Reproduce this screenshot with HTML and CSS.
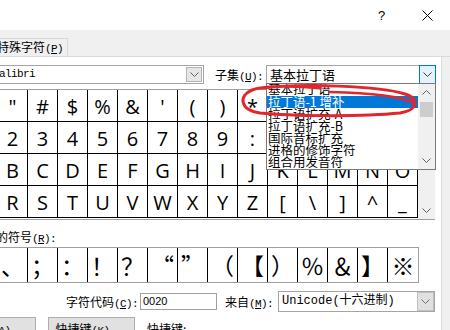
FILE: index.html
```html
<!DOCTYPE html>
<html>
<head>
<meta charset="utf-8">
<link rel="stylesheet" href="styles.css">
</head>
<body>
<div class="window">
  <div class="titlebar">
    <div class="tb-btn help">?</div>
    <div class="tb-btn"><svg class="close" width="11" height="11" viewBox="0 0 11 11"><path d="M0.5 0.5 L10.5 10.5 M10.5 0.5 L0.5 10.5" stroke="#000" stroke-width="1" fill="none"/></svg></div>
  </div>
  <div class="tabs">
    <div class="tab active">符号<span class="k">(<u>S</u>)</span></div>
    <div class="tab">特殊字符<span class="k">(<u>P</u>)</span></div>
  </div>
  <div class="body">
    <div class="page">
      <div class="font-row">
        <div class="lbl-font">字体<span class="k">(<u>F</u>):</span></div>
        <div class="combo font">
          <div class="combo-text mono-s">Calibri</div>
          <div class="combo-btn"><svg width="9" height="5" viewBox="0 0 9 5"><path d="M0.5 0.5 L4.5 4.5 L8.5 0.5" fill="none" stroke="#606060"/></svg></div>
        </div>
        <div class="lbl-sub">子集<span class="k">(<u>U</u>):</span></div>
        <div class="combo sub">
          <div class="combo-text">基本拉丁语</div>
          <div class="combo-btn active"><svg width="9" height="5" viewBox="0 0 9 5"><path d="M0.5 0.5 L4.5 4.5 L8.5 0.5" fill="none" stroke="#404040"/></svg></div>
          <div class="dd-list">
            <div class="dd-items">
              <div class="dd-item">基本拉丁语</div>
              <div class="dd-item sel">拉丁语-1 增补</div>
              <div class="dd-item">拉丁语扩充-A</div>
              <div class="dd-item">拉丁语扩充-B</div>
              <div class="dd-item">国际音标扩充</div>
              <div class="dd-item">进格的修饰字符</div>
              <div class="dd-item">组合用发音符</div>
            </div>
            <div class="dd-scroll">
              <div class="sb-btn"><svg width="9" height="5" viewBox="0 0 9 5"><path d="M0.5 4.5 L4.5 0.5 L8.5 4.5" fill="none" stroke="#606060"/></svg></div>
              <div class="sb-thumb"></div>
              <div class="sb-fill"></div>
              <div class="sb-btn"><svg width="9" height="5" viewBox="0 0 9 5"><path d="M0.5 0.5 L4.5 4.5 L8.5 0.5" fill="none" stroke="#606060"/></svg></div>
            </div>
          </div>
        </div>
      </div>

      <div class="symbols">
        <div class="grid">
          <div class="cell">&nbsp;</div><div class="cell">!</div><div class="cell">&quot;</div><div class="cell">#</div><div class="cell">$</div><div class="cell">%</div><div class="cell">&amp;</div><div class="cell">'</div><div class="cell">(</div><div class="cell">)</div><div class="cell">*</div><div class="cell">+</div><div class="cell">,</div><div class="cell">-</div><div class="cell">.</div><div class="cell">/</div>
          <div class="cell">0</div><div class="cell">1</div><div class="cell">2</div><div class="cell">3</div><div class="cell">4</div><div class="cell">5</div><div class="cell">6</div><div class="cell">7</div><div class="cell">8</div><div class="cell">9</div><div class="cell">:</div><div class="cell">;</div><div class="cell">&lt;</div><div class="cell">=</div><div class="cell">&gt;</div><div class="cell">?</div>
          <div class="cell">@</div><div class="cell">A</div><div class="cell">B</div><div class="cell">C</div><div class="cell">D</div><div class="cell">E</div><div class="cell">F</div><div class="cell">G</div><div class="cell">H</div><div class="cell">I</div><div class="cell">J</div><div class="cell">K</div><div class="cell">L</div><div class="cell">M</div><div class="cell">N</div><div class="cell">O</div>
          <div class="cell">P</div><div class="cell">Q</div><div class="cell">R</div><div class="cell">S</div><div class="cell">T</div><div class="cell">U</div><div class="cell">V</div><div class="cell">W</div><div class="cell">X</div><div class="cell">Y</div><div class="cell">Z</div><div class="cell">[</div><div class="cell">\</div><div class="cell">]</div><div class="cell">^</div><div class="cell">_</div>
        </div>
        <div class="vscroll">
          <div class="sb-btn"><svg width="9" height="5" viewBox="0 0 9 5"><path d="M0.5 4.5 L4.5 0.5 L8.5 4.5" fill="none" stroke="#606060"/></svg></div>
          <div class="sb-fill"></div>
          <div class="sb-btn"><svg width="9" height="5" viewBox="0 0 9 5"><path d="M0.5 0.5 L4.5 4.5 L8.5 0.5" fill="none" stroke="#606060"/></svg></div>
        </div>
      </div>

      <div class="recent-label">近期使用过的符号<span class="k">(<u>R</u>):</span></div>
      <div class="recent">
        <div class="rcell">，</div><div class="rcell">。</div><div class="rcell">、</div><div class="rcell">；</div><div class="rcell">：</div><div class="rcell">！</div><div class="rcell">？</div><div class="rcell qr">“</div><div class="rcell ql">”</div><div class="rcell">（</div><div class="rcell">【</div><div class="rcell">）</div><div class="rcell">％</div><div class="rcell">＆</div><div class="rcell">】</div><div class="rcell">※</div>
      </div>

      <div class="code-row">
        <div class="lbl-code">字符代码<span class="k">(<u>C</u>):</span></div>
        <div class="input">0020</div>
        <div class="lbl-from">来自<span class="k">(<u>M</u>):</span></div>
        <div class="combo from">
          <div class="combo-text mono">Unicode(十六进制)</div>
          <div class="combo-btn dis"><svg width="9" height="5" viewBox="0 0 9 5"><path d="M0.5 0.5 L4.5 4.5 L8.5 0.5" fill="none" stroke="#707070"/></svg></div>
        </div>
      </div>

      <div class="btn-row">
        <div class="btn b1">自动更正<span class="k">(<u>A</u>)...</span></div>
        <div class="btn b2">快捷键<span class="k">(<u>K</u>)...</span></div>
        <div class="lbl-key">快捷键:</div>
      </div>
    </div>
    <div class="side"></div>
  </div>
</div>
<svg class="mark" width="450" height="330" viewBox="0 0 450 330">
  <path d="M262 88 C300 83 380 86 405 94 C420 99 418 110 400 113 C360 117 290 116 260 113 C240 110 238 96 252 90 C262 86 290 85 320 88" fill="none" stroke="#e3262b" stroke-width="3" stroke-linecap="round"/>
  <path d="M330 92 C370 93 400 96 414 103" fill="none" stroke="#e3262b" stroke-width="2.5" stroke-linecap="round"/>
</svg>
</body>
</html>
```
FILE: styles.css
```css
* { box-sizing: border-box; }
html, body { margin: 0; padding: 0; }
body {
  width: 450px;
  height: 330px;
  overflow: hidden;
  position: relative;
  background: #fff;
  color: #000;
  font-family: "Noto Sans CJK SC", "Liberation Sans", sans-serif;
  font-size: 12px;
}
.k {
  font-family: "Liberation Mono", monospace;
  font-size: 11px;
  letter-spacing: -0.6px;
}
.window { margin-left: -75px; width: 525px; }

.titlebar { height: 30px; display: flex; justify-content: flex-end; background: #fff; }
.tb-btn { width: 45px; height: 30px; display: flex; align-items: center; justify-content: center; }
.help { font-family: "Liberation Sans", sans-serif; font-size: 13px; padding-right: 2px; }

.tabs {
  height: 27px;
  background: #f0f0f0;
  border-bottom: 1px solid #d9d9d9;
  display: flex;
  align-items: flex-end;
  padding-left: 5px;
}
.tab {
  height: 18px;
  border: 1px solid #d9d9d9;
  border-bottom: none;
  padding: 0 6px;
  line-height: 16px;
  background: #f0f0f0;
  white-space: nowrap;
}
.tab.active { width: 61px; height: 21px; background: #fff; margin-bottom: -1px; }
.tab + .tab { margin-left: -1px; width: 78px; }

.body { display: flex; height: 273px; }
.page { width: 516px; background: #fff; padding: 8px 0 0 12px; }
.side { flex: 1; background: #f0f0f0; border-left: 1px solid #dcdcdc; }

.font-row { display: flex; align-items: center; height: 19px; }
.lbl-font { width: 53px; white-space: nowrap; overflow: hidden; }
.combo {
  height: 19px;
  border: 1px solid #a5a5a5;
  display: flex;
  align-items: center;
  position: relative;
  background: #fff;
}
.combo.font { width: 214px; }
.combo-text { flex: 1; padding-left: 2px; white-space: nowrap; overflow: hidden; line-height: 17px; }
.mono-s { font-family: "Liberation Mono", monospace; font-size: 11px; letter-spacing: -0.6px; }
.mono { font-family: "Liberation Mono", "Noto Sans CJK SC", monospace; font-size: 12px; padding-left: 3px; }
.combo-btn {
  width: 16px;
  height: 15px;
  margin-right: 1px;
  background: #e6e6e6;
  border: 1px solid #b4b4b4;
  display: flex;
  align-items: center;
  justify-content: center;
}
.combo-btn.active {
  width: 17px;
  height: 19px;
  margin: -1px -1px -1px 0;
  background: #e5f1fb;
  border: 1px solid #0078d7;
}
.lbl-sub { margin-left: 11px; width: 51px; white-space: nowrap; }
.combo.sub { width: 170px; }
.combo.sub .combo-text { padding-left: 3px; font-size: 13px; }

.dd-list {
  position: absolute;
  left: -1px;
  top: 17px;
  width: 170px;
  height: 87px;
  border: 1px solid #7a7a7a;
  background: #fff;
  display: flex;
  z-index: 5;
}
.dd-items { flex: 1; overflow: hidden; }
.dd-item { height: 12px; line-height: 12px; padding-left: 1px; white-space: nowrap; font-size: 12.5px; }
.dd-item:first-child { margin-top: -3px; height: 15px; line-height: 15px; overflow: hidden; }
.dd-item.sel { background: #0078d7; color: #fff; }
.dd-scroll { width: 17px; background: #f0f0f0; display: flex; flex-direction: column; }
.sb-btn { height: 17px; display: flex; align-items: center; justify-content: center; flex: none; }
.sb-thumb { height: 15px; margin: 1px 2px 0; background: #cdcdcd; }
.sb-fill { flex: 1; }

.symbols {
  margin-top: 5px;
  display: flex;
  width: 498px;
  border-top: 1px solid #a0a0a0;
  border-bottom: 1px solid #a0a0a0;
  border-left: 1px solid #a0a0a0;
}
.grid {
  display: grid;
  grid-template-columns: repeat(16, 30px);
  grid-auto-rows: 32px;
  padding-bottom: 1px;
}
.cell {
  border-right: 1px solid #000;
  border-bottom: 1px solid #000;
  display: flex;
  align-items: center;
  justify-content: center;
  font-family: "Open Sans", "Liberation Sans", sans-serif;
  font-size: 20px;
  padding-top: 2px;
}
.vscroll { width: 17px; background: #f0f0f0; display: flex; flex-direction: column; }

.recent-label { margin-top: 10px; margin-left: -1px; height: 14px; line-height: 14px; white-space: nowrap; }
.recent { margin-top: 3px; display: flex; width: 482px; border: 1px solid #a0a0a0; }
.rcell {
  width: 30px;
  height: 34px;
  border-right: 1px solid #000;
  display: flex;
  align-items: center;
  justify-content: center;
  font-family: "Noto Sans CJK SC", sans-serif;
  font-size: 23px;
  flex: none;
}
.rcell:last-child { border-right: none; }
.rcell.qr { justify-content: flex-end; padding-right: 3px; }
.rcell.ql { justify-content: flex-start; padding-left: 3px; }

.code-row { margin-top: 8px; display: flex; align-items: center; height: 21px; padding-left: 126px; }
.lbl-code { width: 75px; text-align: right; white-space: nowrap; }
.input {
  margin-left: 2px;
  width: 77px;
  height: 17px;
  border: 1px solid #a0a0a0;
  font-family: "Liberation Sans", sans-serif;
  font-size: 11px;
  line-height: 15px;
  padding-left: 2px;
}
.lbl-from { margin-left: 8px; width: 50px; white-space: nowrap; }
.combo.from { margin-left: 3px; width: 157px; height: 21px; }
.combo-btn.dis { width: 17px; height: 19px; background: #e0e0e0; border: 1px solid #c0c0c0; margin-right: 0; }

.btn-row { margin-top: 5px; display: flex; gap: 12px; align-items: flex-start; }
.btn {
  height: 23px;
  border: 1px solid #adadad;
  background: #e1e1e1;
  text-align: center;
  line-height: 21px;
  white-space: nowrap;
}
.btn.b1 { width: 99px; }
.btn.b2 { width: 87px; }
.lbl-key { line-height: 23px; white-space: nowrap; }

.mark { position: absolute; left: 0; top: 0; pointer-events: none; z-index: 10; }
```
